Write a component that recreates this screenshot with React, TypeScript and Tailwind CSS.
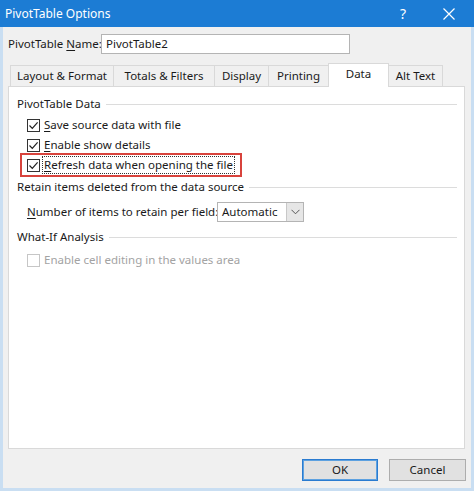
import React from "react";

function Check({ checked = true, disabled = false }: { checked?: boolean; disabled?: boolean }) {
  return (
    <div
      className={
        "w-[13px] h-[13px] shrink-0 border bg-white flex items-center justify-center " +
        (disabled ? "border-[#c6c6c6]" : "border-[#333333]")
      }
    >
      {checked && (
        <svg width="11" height="11" viewBox="0 0 11 11">
          <path d="M1.5 5.5 L4.3 8.3 L9.6 2.4" stroke="#222" strokeWidth="1.2" fill="none" />
        </svg>
      )}
    </div>
  );
}

function GroupHeader({ children }: { children: React.ReactNode }) {
  return (
    <div className="h-[16px] flex items-center pl-[8px] pr-[7px]">
      <span className="whitespace-nowrap">{children}</span>
      <div className="flex-1 h-px bg-[#dcdcdc] ml-[5px]" />
    </div>
  );
}

function U({ children }: { children: React.ReactNode }) {
  return <span className="underline underline-offset-2">{children}</span>;
}

const tabs = [
  { label: "Layout & Format", w: "w-[104px]" },
  { label: "Totals & Filters", w: "w-[102px]" },
  { label: "Display", w: "w-[55px]" },
  { label: "Printing", w: "w-[61px]" },
  { label: "Data", w: "w-[61px]", active: true },
  { label: "Alt Text", w: "w-[55px]" },
];

export default function App() {
  return (
    <div className="w-[474px] h-[491px] bg-[#c9def2] flex flex-col font-['Noto_Sans',sans-serif] text-[11.5px] text-[#1a1a1a] leading-none">
      {/* Title bar */}
      <div className="h-[27px] shrink-0 bg-[#1c7cd4] flex items-center text-white">
        <span className="pl-[5px] text-[12px]">PivotTable Options</span>
        <div className="ml-auto w-[46px] flex justify-center text-[14px]">?</div>
        <div className="w-[46px] mr-[2px] flex justify-center">
          <svg width="12" height="12" viewBox="0 0 12 12">
            <path d="M0.5 0.5 L11.5 11.5 M11.5 0.5 L0.5 11.5" stroke="white" strokeWidth="1.2" />
          </svg>
        </div>
      </div>

      {/* Body */}
      <div className="flex-1 mx-[3px] mb-[3px] bg-[#f0f0f0] flex flex-col">
        {/* Name row */}
        <div className="mt-[7px] h-[20px] flex items-center pl-[5px]">
          <span className="w-[93px] shrink-0 whitespace-nowrap">
            PivotTable <U>N</U>ame:
          </span>
          <div className="w-[249px] h-[20px] bg-white border border-[#b4b4b4] flex items-center pl-[4px]">
            PivotTable2
          </div>
        </div>

        {/* Tabs */}
        <div className="mt-[9px] h-[23px] flex items-end pl-[7px] relative z-10">
          {tabs.map((t, i) => (
            <div
              key={t.label}
              className={
                t.w +
                " flex items-center justify-center border-t border-l border-r border-[#d9d9d9] whitespace-nowrap " +
                (i > 0 ? "-ml-px " : "") +
                (t.active ? "h-[24px] -mb-px bg-white relative z-10 pb-[3px]" : "h-[21px] bg-[#f0f0f0]")
              }
            >
              {t.label}
            </div>
          ))}
        </div>

        {/* Panel */}
        <div className="ml-[5px] w-[457px] h-[363px] bg-white border border-[#d9d9d9] flex flex-col pt-[9px]">
          <GroupHeader>PivotTable Data</GroupHeader>

          <div className="mt-[3px] h-[20px] flex items-center pl-[18px]">
            <Check />
            <span className="ml-[4px] whitespace-nowrap">
              <U>S</U>ave source data with file
            </span>
          </div>
          <div className="h-[20px] flex items-center pl-[18px]">
            <Check />
            <span className="ml-[4px] whitespace-nowrap">
              <U>E</U>nable show details
            </span>
          </div>
          <div className="-my-[2px] ml-[11px] w-[222px] h-[24px] border-2 border-[#d8433c] flex items-center pl-[5px]">
            <Check />
            <span className="ml-[2px] px-[1px] py-[2px] border border-dotted border-[#333] whitespace-nowrap">
              <U>R</U>efresh data when opening the file
            </span>
          </div>

          <div className="mt-[4px]">
            <GroupHeader>Retain items deleted from the data source</GroupHeader>
          </div>
          <div className="mt-[7px] h-[20px] flex items-center pl-[18px]">
            <span className="w-[190px] shrink-0 whitespace-nowrap">
              <U>N</U>umber of items to retain per field:
            </span>
            <div className="w-[87px] h-[20px] border border-[#b4b4b4] flex items-stretch bg-white">
              <div className="flex-1 flex items-center pl-[4px]">Automatic</div>
              <div className="w-[17px] bg-[#e6e6e6] border-l border-[#c8c8c8] flex items-center justify-center">
                <svg width="9" height="6" viewBox="0 0 9 6">
                  <path d="M0.5 0.8 L4.5 4.8 L8.5 0.8" stroke="#555" strokeWidth="1" fill="none" />
                </svg>
              </div>
            </div>
          </div>

          <div className="mt-[7px]">
            <GroupHeader>What-If Analysis</GroupHeader>
          </div>
          <div className="mt-[5px] h-[20px] flex items-center pl-[18px] text-[#a3a3a3]">
            <Check checked={false} disabled />
            <span className="ml-[4px] whitespace-nowrap">Enable cell editing in the values area</span>
          </div>
        </div>

        {/* Buttons */}
        <div className="mt-[10px] h-[22px] flex justify-end pr-[5px] gap-[11px]">
          <button className="w-[76px] h-[22px] bg-[#e1e1e1] border border-[#2a7bd0] shadow-[inset_0_0_0_1px_#5da1e0] text-[11.5px] text-[#1a1a1a]">
            OK
          </button>
          <button className="w-[77px] h-[22px] bg-[#e1e1e1] border border-[#adadad] text-[11.5px] text-[#1a1a1a]">
            Cancel
          </button>
        </div>
      </div>
    </div>
  );
}
